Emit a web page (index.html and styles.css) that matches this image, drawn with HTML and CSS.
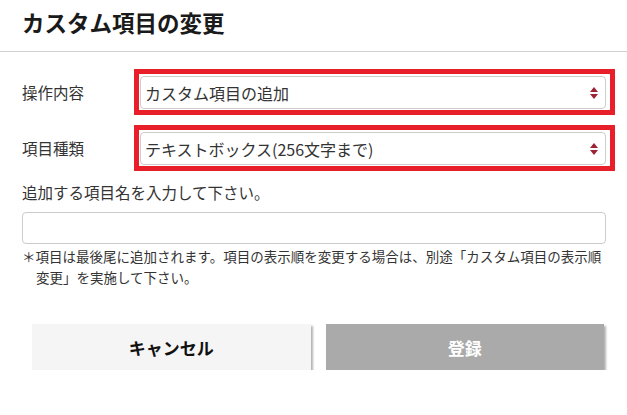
FILE: index.html
```html
<!DOCTYPE html>
<html lang="ja">
<head>
  <meta charset="UTF-8" />
  <title>カスタム項目の変更</title>
  <link rel="stylesheet" href="styles.css">
</head>
<body>
  <!-- HEADER -->
  <div class="header">
    <h1>カスタム項目の変更</h1>
  </div>

  <div class="content">
    <div class="form-row">
      <label class="row-label">操作内容</label>
      <div class="highlight">
        <div class="select-wrap">
          <select class="select">
            <option>カスタム項目の追加</option>
          </select>
          <svg class="select-arrow" width="8" height="12" viewBox="0 0 8 12">
            <path d="M4 0 L8 5 L0 5 Z M0 7 L8 7 L4 12 Z" fill="#9c2236"/>
          </svg>
        </div>
      </div>
    </div>
    <div class="form-row second">
      <label class="row-label">項目種類</label>
      <div class="highlight">
        <div class="select-wrap">
          <select class="select">
            <option>テキストボックス(256文字まで)</option>
          </select>
          <svg class="select-arrow" width="8" height="12" viewBox="0 0 8 12">
            <path d="M4 0 L8 5 L0 5 Z M0 7 L8 7 L4 12 Z" fill="#9c2236"/>
          </svg>
        </div>
      </div>
    </div>

    <div class="name-label">追加する項目名を入力して下さい。</div>
    <input type="text" class="name-input">
    <p class="note">＊項目は最後尾に追加されます。項目の表示順を変更する場合は、別途「カスタム項目の表示順変更」を実施して下さい。</p>

    <!-- Buttons -->
    <div class="buttons">
      <button class="btn btn-cancel">キャンセル</button>
      <button class="btn btn-submit" disabled>登録</button>
    </div>
  </div>
</body>
</html>
```

FILE: styles.css
```css
body {
  margin: 0;
  background: #fff;
  color: #333;
  font-family: "Noto Sans CJK JP", "Noto Sans", sans-serif;
}
.header {
  height: 52px;
  box-sizing: border-box;
  border-bottom: 1px solid #d0d0d0;
  padding: 0 22px 6px 22px;
  display: flex;
  align-items: center;
}
h1 {
  margin: 0;
  font-size: 22.5px;
  font-weight: bold;
  color: #1a1a1a;
  line-height: 1;
}
.content {
  padding: 17px 21px 0 22px;
}
.form-row {
  display: grid;
  grid-template-columns: 112px 1fr;
  align-items: center;
  margin-right: -9px;
}
.form-row.second {
  margin-top: 10px;
}
.row-label {
  font-size: 15.5px;
  color: #333;
}
.highlight {
  border: 5px solid #e81f28;
  padding: 2px 4px 1px 1px;
}
.select-wrap {
  position: relative;
}
.select {
  display: block;
  width: 100%;
  height: 33px;
  appearance: none;
  -webkit-appearance: none;
  background: #fff;
  border: 1px solid #ccc;
  border-radius: 4px;
  padding: 0 24px 0 4px;
  font-family: inherit;
  font-size: 16px;
  font-weight: normal;
  color: #333;
}
.select-arrow {
  position: absolute;
  right: 8px;
  top: 11px;
}
.name-label {
  margin-top: 10px;
  font-size: 15.5px;
  line-height: 22px;
  color: #333;
}
.name-input {
  display: block;
  box-sizing: border-box;
  width: 100%;
  height: 32px;
  margin-top: 9px;
  border: 1px solid #ccc;
  border-radius: 4px;
}
.note {
  margin: 2px 0 0 0;
  padding-left: 14px;
  text-indent: -14px;
  font-size: 13.5px;
  line-height: 21px;
  color: #333;
}
.buttons {
  display: flex;
  gap: 15px;
  margin: 36px 2px 0 10px;
}
.btn {
  flex: 1;
  height: 46px;
  border: none;
  font-family: inherit;
  font-size: 17px;
  font-weight: bold;
  box-shadow: 2px 2px 2px rgba(0,0,0,0.3);
}
.btn-cancel {
  background: #f5f5f5;
  color: #111;
}
.btn-submit {
  background: #aaa;
  color: #fff;
}
```
